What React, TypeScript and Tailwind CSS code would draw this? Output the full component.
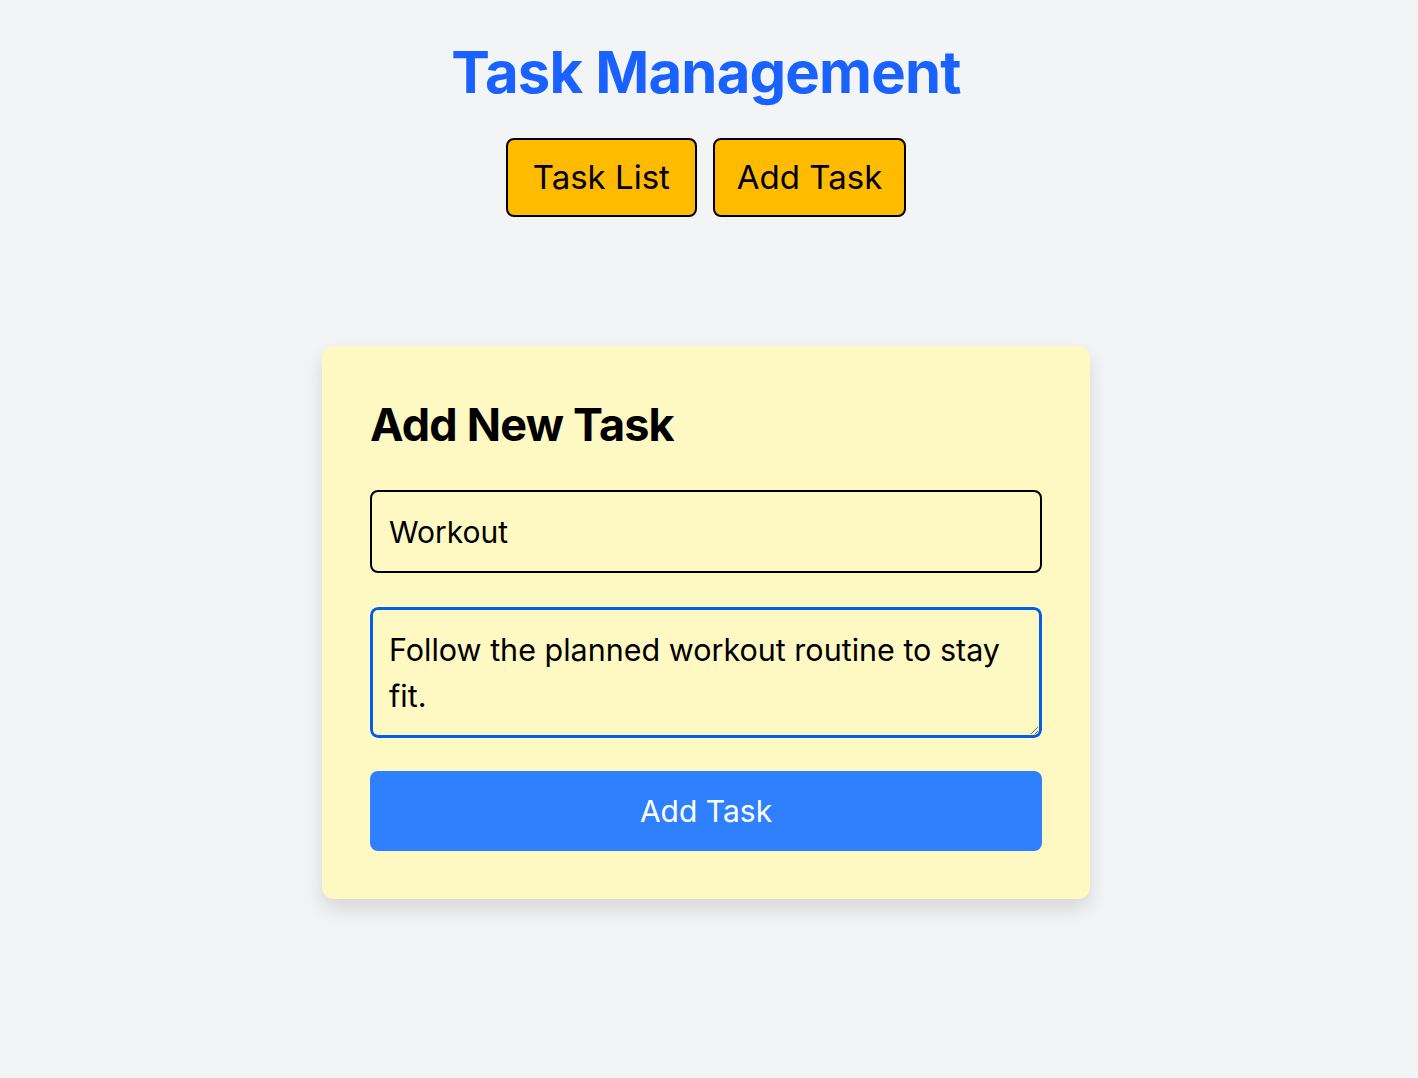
import { useState } from "react";

export default function App() {
  const [title, setTitle] = useState("Workout");
  const [description, setDescription] = useState(
    "Follow the planned workout routine to stay fit."
  );

  return (
    <div
      className="min-h-screen bg-[#f3f4f6] flex flex-col items-center pt-[38px] pr-[6px]"
      style={{ fontFamily: "Inter, 'Noto Sans', sans-serif" }}
    >
      <h1 className="text-[58px] leading-[68px] font-bold text-[#1a62ff] tracking-[-0.8px]">
        Task Management
      </h1>

      <nav className="mt-[32px] flex gap-4">
        <button className="h-[79px] px-[25px] bg-[#ffbb00] border-2 border-black rounded-lg text-[33px] text-black">
          Task List
        </button>
        <button className="h-[79px] px-[22px] bg-[#ffbb00] border-2 border-black rounded-lg text-[33px] text-black">
          Add Task
        </button>
      </nav>

      <form
        onSubmit={(e) => e.preventDefault()}
        className="mt-[129px] w-[768px] bg-[#fef9c3] rounded-xl shadow-[0_10px_20px_rgba(0,0,0,0.12)] p-12 flex flex-col"
      >
        <h2 className="text-[45px] leading-[62px] font-bold text-black tracking-[-0.8px]">
          Add New Task
        </h2>

        <input
          value={title}
          onChange={(e) => setTitle(e.target.value)}
          className="mt-[34px] h-[83px] w-full bg-transparent border-2 border-black rounded-lg px-[17px] text-[30px] text-black focus:outline-none"
        />

        <textarea
          value={description}
          onChange={(e) => setDescription(e.target.value)}
          rows={2}
          className="mt-[34px] h-[131px] w-full bg-transparent border-[3px] border-[#0060df] rounded-lg px-[16px] pt-[17px] pb-[11px] text-[30.5px] leading-[46px] text-black outline outline-1 outline-white focus:outline-none"
        />

        <button
          type="submit"
          className="mt-[33px] h-[80px] w-full bg-[#2f80ff] rounded-lg text-[30px] text-white"
        >
          Add Task
        </button>
      </form>
    </div>
  );
}
